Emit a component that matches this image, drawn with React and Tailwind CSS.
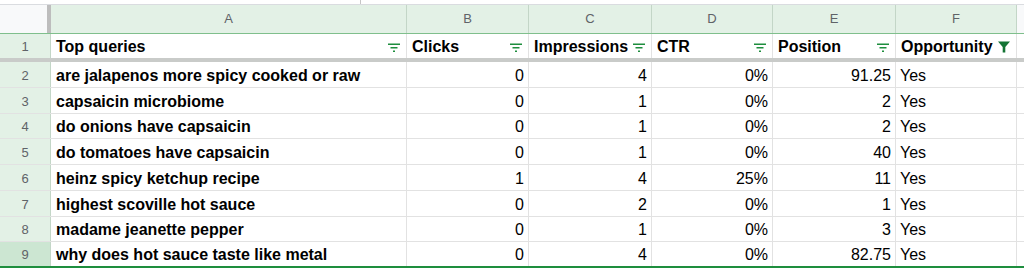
import React from 'react'

const rows = [
  ['are jalapenos more spicy cooked or raw', 0, 4, '0%', '91.25', 'Yes'],
  ['capsaicin microbiome', 0, 1, '0%', '2', 'Yes'],
  ['do onions have capsaicin', 0, 1, '0%', '2', 'Yes'],
  ['do tomatoes have capsaicin', 0, 1, '0%', '40', 'Yes'],
  ['heinz spicy ketchup recipe', 1, 4, '25%', '11', 'Yes'],
  ['highest scoville hot sauce', 0, 2, '0%', '1', 'Yes'],
  ['madame jeanette pepper', 0, 1, '0%', '3', 'Yes'],
  ['why does hot sauce taste like metal', 0, 4, '0%', '82.75', 'Yes'],
]

// column widths in px: A..F
const widths = ['w-[356px]', 'w-[122px]', 'w-[123px]', 'w-[121px]', 'w-[123px]', 'w-[121px]']

function FilterLines() {
  return (
    <svg width="12" height="9" viewBox="0 0 12 9" className="shrink-0 mb-[4px]">
      <rect x="0" y="0.5" width="12" height="1.5" fill="#1e8e3e" />
      <rect x="2.5" y="4" width="7" height="1.5" fill="#1e8e3e" />
      <rect x="5" y="7.5" width="2" height="1.5" fill="#1e8e3e" />
    </svg>
  )
}

function Funnel() {
  return (
    <svg width="12" height="12" viewBox="0 0 12 12" className="shrink-0 mb-[3px]">
      <path d="M0 0.5 H12 L7.3 6 V11.5 H4.7 V6 Z" fill="#137333" />
    </svg>
  )
}

export default function App() {
  const headers = [
    { label: 'Top queries', icon: 'lines', spread: true },
    { label: 'Clicks', icon: 'lines', spread: true },
    { label: 'Impressions', icon: 'lines', spread: false },
    { label: 'CTR', icon: 'lines', spread: true },
    { label: 'Position', icon: 'lines', spread: true },
    { label: 'Opportunity', icon: 'funnel', spread: false },
  ]

  return (
    <div className="w-[1024px] h-[271px] overflow-hidden bg-white text-black" style={{ fontFamily: '"Liberation Sans", Arial, sans-serif' }}>
      {/* formula bar remnant */}
      <div className="h-[5px] border-b border-[#dadce0] bg-white flex">
        <div className="w-[360px]" />
        <div className="w-px bg-[#c6c6c6]" />
      </div>

      {/* column letters */}
      <div className="flex h-[29px] border-b border-[#7fbf8c]">
        <div className="w-[47px] bg-[#f8f9fa]" />
        <div className="w-[4px] bg-[#bdbdbd]" />
        {['A', 'B', 'C', 'D', 'E', 'F'].map((l, i) => (
          <div key={l} className={`${widths[i]} shrink-0 bg-[#e3f1e6] border-r border-[#c3d6c7] flex items-center justify-center text-[13px] text-[#5f6368]`}>
            {l}
          </div>
        ))}
        <div className="flex-1 bg-[#f8f9fa]" />
      </div>

      {/* row 1 header */}
      <div className="flex h-[24px] leading-[18px]">
        <div className="w-[51px] shrink-0 bg-[#e3f1e6] border-r border-[#c3d6c7] flex items-end justify-center pb-[2px] text-[13px] text-[#5f6368]">1</div>
        {headers.map((h, i) => (
          <div key={h.label} className={`${widths[i]} shrink-0 border-r border-[#e2e2e2] flex items-end pb-[2px] pl-[5px] pr-[6px] font-bold text-[16px] ${h.spread ? 'justify-between' : 'gap-[5px]'}`}>
            <span className="whitespace-nowrap">{h.label}</span>
            {h.icon === 'lines' ? <FilterLines /> : <Funnel />}
          </div>
        ))}
        <div className="flex-1" />
      </div>

      {/* frozen divider */}
      <div className="h-[4px] bg-[#c9cbc9]" />

      {/* data rows */}
      {rows.map((r, idx) => (
        <div key={idx} className={`flex h-[25.75px] leading-[18px] ${idx === rows.length - 1 ? 'border-b-2 border-[#1e8e3e]' : 'border-b border-[#e2e2e2]'}`}>
          <div className={`w-[51px] shrink-0 border-r border-[#c3d6c7] flex items-end pb-[2px] justify-center text-[13px] text-[#5f6368] ${idx === rows.length - 1 ? 'bg-[#cce6d2]' : 'bg-[#e3f1e6]'}`}>
            {idx + 2}
          </div>
          <div className={`${widths[0]} shrink-0 border-r border-[#e2e2e2] flex items-end pb-[2px] pl-[5px] font-bold text-[16px] whitespace-nowrap`}>{r[0]}</div>
          {[r[1], r[2], r[3], r[4]].map((v, j) => (
            <div key={j} className={`${widths[j + 1]} shrink-0 border-r border-[#e2e2e2] flex items-end pb-[2px] justify-end pr-[4px] text-[16px]`}>{v}</div>
          ))}
          <div className={`${widths[5]} shrink-0 border-r border-[#e2e2e2] flex items-end pb-[2px] pl-[4px] text-[16px]`}>{r[5]}</div>
          <div className="flex-1" />
        </div>
      ))}
    </div>
  )
}
